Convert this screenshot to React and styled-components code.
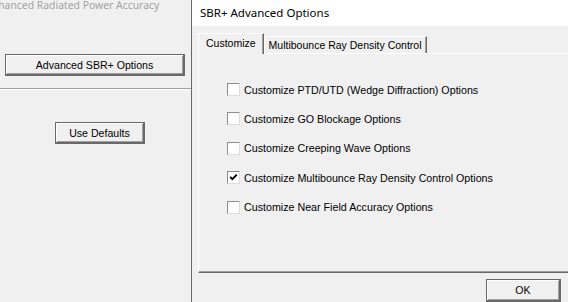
import React from "react";
import styled, { createGlobalStyle } from "styled-components";

const GlobalStyle = createGlobalStyle`
  html, body {
    margin: 0;
    padding: 0;
    background: #f0f0f0;
  }
  body {
    font-family: "Liberation Sans", Arial, sans-serif;
    font-size: 11px;
    color: #000;
  }
`;

const Screen = styled.div`
  display: flex;
  width: 568px;
  height: 302px;
  overflow: hidden;
  background: #f0f0f0;
`;

const LeftPanel = styled.div`
  width: 191px;
  flex-shrink: 0;
  border-right: 1px solid #696969;
  overflow: hidden;
  display: flex;
  flex-direction: column;
`;

const FadedCaption = styled.div`
  font-family: "Noto Sans", "Liberation Sans", sans-serif;
  font-size: 10.4px;
  line-height: 12px;
  color: #a3a3a3;
  white-space: nowrap;
  margin-left: -14px;
  margin-top: -1px;
`;

const WinButton = styled.button`
  font-family: "Liberation Sans", Arial, sans-serif;
  font-size: 10.6px;
  color: #000;
  background: #f0f0f0;
  border: 1px solid #696969;
  border-width: 1px 2px 2px 1px;
  box-shadow: inset 1px 1px #fff, inset -1px -1px #a0a0a0;
  padding: 0;
  width: ${(p) => p.$width}px;
  height: ${(p) => p.$height || 22}px;
  margin-top: ${(p) => p.$top || 0}px;
  margin-left: ${(p) => p.$left || 0}px;
  flex-shrink: 0;
`;

const Divider = styled.div`
  margin-top: 12px;
  height: 1px;
  background: #a0a0a0;
  border-bottom: 1px solid #fff;
`;

const RightPanel = styled.div`
  flex: 1;
  display: flex;
  flex-direction: column;
  min-width: 0;
`;

const TitleStrip = styled.div`
  height: 28px;
  background: #fff;
  font-family: "Noto Sans", "Liberation Sans", sans-serif;
  font-size: 11.5px;
  line-height: 26px;
  padding-left: 8px;
  white-space: nowrap;
`;

const TabRow = styled.div`
  display: flex;
  align-items: flex-end;
  margin-top: 8px;
  margin-left: 6px;
  height: 19px;
`;

const Tab = styled.div`
  position: relative;
  height: ${(p) => (p.$active ? 20 : 16)}px;
  line-height: ${(p) => (p.$active ? 18 : 16)}px;
  padding: 0 ${(p) => (p.$active ? 7 : 4)}px;
  border-top: 1px solid #fff;
  border-left: 1px solid #fff;
  border-right: 1px solid #696969;
  box-shadow: inset -1px 0 #a0a0a0;
  background: #f0f0f0;
  white-space: nowrap;
  font-size: 10.5px;
  z-index: ${(p) => (p.$active ? 2 : 1)};
  margin-bottom: ${(p) => (p.$active ? -1 : 0)}px;
`;

const TabPanel = styled.div`
  margin-left: 6px;
  margin-right: -20px;
  height: 216px;
  border-top: 1px solid #fff;
  border-left: 1px solid #fff;
  border-bottom: 1px solid #696969;
  box-shadow: inset 0 -1px #a0a0a0;
  display: flex;
  flex-direction: column;
  padding: 29px 0 0 28px;
  gap: 16.4px;
`;

const CheckRow = styled.label`
  display: flex;
  align-items: center;
  gap: 4px;
  height: 13px;
  font-size: 10.7px;
  white-space: nowrap;
`;

const Box = styled.span`
  width: 11px;
  height: 11px;
  flex-shrink: 0;
  background: #fff;
  border: 1px solid #8e8e8e;
  border-right-color: #dcdcdc;
  border-bottom-color: #dcdcdc;
  display: flex;
  align-items: center;
  justify-content: center;
`;

const Footer = styled.div`
  display: flex;
  justify-content: flex-end;
  padding: 6px 7px 0 0;
`;

const CheckMark = () => (
  <svg width="9" height="9" viewBox="0 0 9 9">
    <path d="M1.2 3.8 L3.4 6.2 L7.8 1.6" fill="none" stroke="#000" strokeWidth="1.9" />
  </svg>
);

const options = [
  { label: "Customize PTD/UTD (Wedge Diffraction) Options", checked: false },
  { label: "Customize GO Blockage Options", checked: false },
  { label: "Customize Creeping Wave Options", checked: false },
  { label: "Customize Multibounce Ray Density Control Options", checked: true },
  { label: "Customize Near Field Accuracy Options", checked: false },
];

export default function App() {
  return (
    <Screen>
      <GlobalStyle />
      <LeftPanel>
        <FadedCaption>Enhanced Radiated Power Accuracy</FadedCaption>
        <WinButton $width={180} $top={43} $left={5}>
          Advanced SBR+ Options
        </WinButton>
        <Divider />
        <WinButton $width={90} $top={32} $left={55}>
          Use Defaults
        </WinButton>
      </LeftPanel>
      <RightPanel>
        <TitleStrip>SBR+ Advanced Options</TitleStrip>
        <TabRow>
          <Tab $active>Customize</Tab>
          <Tab>Multibounce Ray Density Control</Tab>
        </TabRow>
        <TabPanel>
          {options.map((o) => (
            <CheckRow key={o.label}>
              <Box>{o.checked && <CheckMark />}</Box>
              {o.label}
            </CheckRow>
          ))}
        </TabPanel>
        <Footer>
          <WinButton $width={75} $height={23}>OK</WinButton>
        </Footer>
      </RightPanel>
    </Screen>
  );
}
